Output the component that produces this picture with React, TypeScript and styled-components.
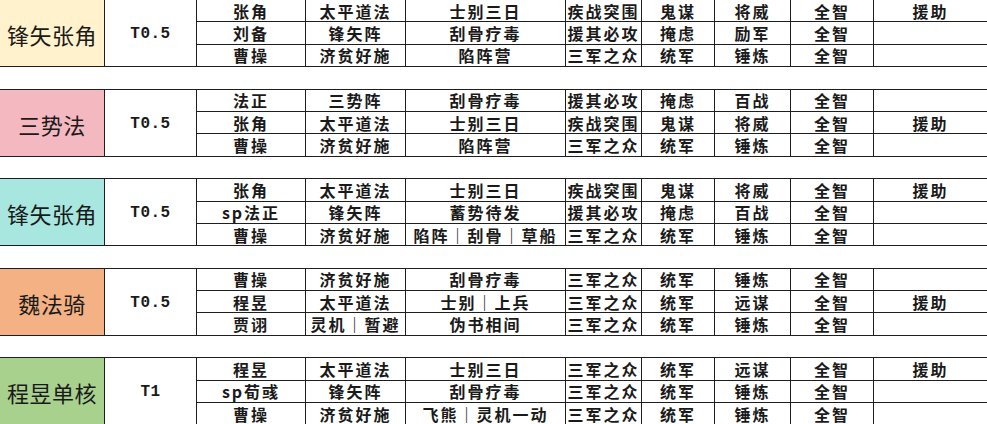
import React from "react";
import styled, { createGlobalStyle } from "styled-components";

const GlobalStyle = createGlobalStyle`
  html, body {
    margin: 0;
    padding: 0;
    background: #ffffff;
    overflow: hidden;
  }
  body {
    font-family: "Noto Sans CJK SC", "Liberation Serif", serif;
    color: #111111;
  }
`;

const ROW_H = 22.4;
const LINE = "#1e1e1e";

const Page = styled.div`
  width: 987px;
  height: 425px;
  margin-top: -1px;
  display: flex;
  flex-direction: column;
  gap: ${ROW_H - 1}px;
  overflow: hidden;
`;

const Group = styled.div`
  display: grid;
  grid-template-columns: 105px 92px 109px 100px 160px 76px 73px 76px 83px 1fr;
  grid-template-rows: repeat(3, ${ROW_H}px);
  border-top: 1px solid ${LINE};
  flex: none;
`;

const LabelCell = styled.div<{ $bg: string }>`
  grid-row: span 3;
  background: ${(p) => p.$bg};
  border-right: 1px solid ${LINE};
  border-bottom: 1px solid ${LINE};
  display: flex;
  align-items: center;
  justify-content: center;
  padding-top: 2px;
  font-family: "Noto Sans CJK SC", serif;
  font-size: 22px;
  font-weight: 400;
  letter-spacing: 0.5px;
  color: #1a1a1a;
  box-sizing: border-box;
`;

const TierCell = styled.div`
  grid-row: span 3;
  border-right: 1px solid ${LINE};
  border-bottom: 1px solid ${LINE};
  display: flex;
  align-items: center;
  justify-content: center;
  padding-top: 2px;
  font-family: "Liberation Mono", "Noto Sans CJK SC", monospace;
  font-size: 16px;
  font-weight: 700;
  letter-spacing: 0.5px;
  color: #1a1a1a;
  box-sizing: border-box;
`;

const Cell = styled.div<{ $last?: boolean }>`
  border-right: ${(p) => (p.$last ? "none" : `1px solid ${LINE}`)};
  border-bottom: 1px solid ${LINE};
  display: flex;
  align-items: center;
  justify-content: center;
  font-family: "Noto Sans CJK SC", "Liberation Serif", serif;
  font-size: 16px;
  font-weight: 700;
  letter-spacing: 2px;
  white-space: nowrap;
  overflow: visible;
  color: #1a1a1a;
  box-sizing: border-box;
  line-height: 1;
`;

type GroupData = {
  label: string;
  bg: string;
  tier: string;
  rows: string[][];
};

const groups: GroupData[] = [
  {
    label: "锋矢张角",
    bg: "#fff2cc",
    tier: "T0.5",
    rows: [
      ["张角", "太平道法", "士别三日", "疾战突围", "鬼谋", "将威", "全智", "援助"],
      ["刘备", "锋矢阵", "刮骨疗毒", "援其必攻", "掩虑", "励军", "全智", ""],
      ["曹操", "济贫好施", "陷阵营", "三军之众", "统军", "锤炼", "全智", ""],
    ],
  },
  {
    label: "三势法",
    bg: "#f4b8c0",
    tier: "T0.5",
    rows: [
      ["法正", "三势阵", "刮骨疗毒", "援其必攻", "掩虑", "百战", "全智", ""],
      ["张角", "太平道法", "士别三日", "疾战突围", "鬼谋", "将威", "全智", "援助"],
      ["曹操", "济贫好施", "陷阵营", "三军之众", "统军", "锤炼", "全智", ""],
    ],
  },
  {
    label: "锋矢张角",
    bg: "#a8e7e0",
    tier: "T0.5",
    rows: [
      ["张角", "太平道法", "士别三日", "疾战突围", "鬼谋", "将威", "全智", "援助"],
      ["sp法正", "锋矢阵", "蓄势待发", "援其必攻", "掩虑", "百战", "全智", ""],
      ["曹操", "济贫好施", "陷阵｜刮骨｜草船", "三军之众", "统军", "锤炼", "全智", ""],
    ],
  },
  {
    label: "魏法骑",
    bg: "#f4b183",
    tier: "T0.5",
    rows: [
      ["曹操", "济贫好施", "刮骨疗毒", "三军之众", "统军", "锤炼", "全智", ""],
      ["程昱", "太平道法", "士别｜上兵", "三军之众", "统军", "远谋", "全智", "援助"],
      ["贾诩", "灵机｜暂避", "伪书相间", "三军之众", "统军", "锤炼", "全智", ""],
    ],
  },
  {
    label: "程昱单核",
    bg: "#a9d18e",
    tier: "T1",
    rows: [
      ["程昱", "太平道法", "士别三日", "三军之众", "统军", "远谋", "全智", "援助"],
      ["sp荀彧", "锋矢阵", "刮骨疗毒", "三军之众", "统军", "锤炼", "全智", ""],
      ["曹操", "济贫好施", "飞熊｜灵机一动", "三军之众", "统军", "锤炼", "全智", ""],
    ],
  },
];

export default function App() {
  return (
    <>
      <GlobalStyle />
      <Page>
        {groups.map((g, gi) => (
          <Group key={gi}>
            <LabelCell $bg={g.bg}>{g.label}</LabelCell>
            <TierCell>{g.tier}</TierCell>
            {g.rows.map((row, ri) =>
              row.map((text, ci) => (
                <Cell key={`${ri}-${ci}`} $last={ci === row.length - 1}>
                  {text}
                </Cell>
              ))
            )}
          </Group>
        ))}
      </Page>
    </>
  );
}
